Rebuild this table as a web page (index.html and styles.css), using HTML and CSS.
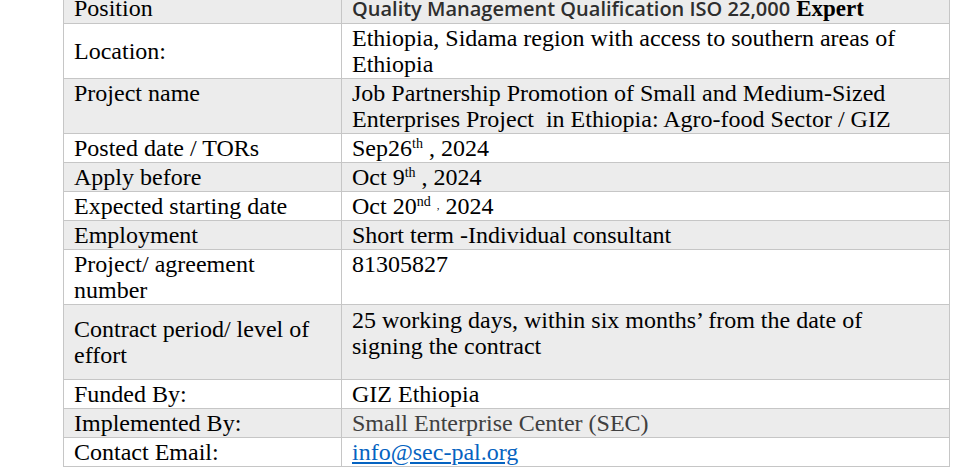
FILE: index.html
```html
<!DOCTYPE html>
<html>
<head>
<meta charset="utf-8">
<link rel="stylesheet" href="styles.css">
</head>
<body>
<table class="info">
  <colgroup><col class="c-label"><col class="c-value"></colgroup>
  <tr class="alt">
    <td>Position</td>
    <td class="val"><span class="head-sans">Quality Management Qualification ISO 22,000</span> <b class="head-serif">Expert</b></td>
  </tr>
  <tr>
    <td class="mid">Location:</td>
    <td class="val">Ethiopia, Sidama region with access to southern areas of Ethiopia</td>
  </tr>
  <tr class="alt">
    <td>Project name</td>
    <td class="val">Job Partnership Promotion of Small and Medium-Sized Enterprises Project&nbsp; in Ethiopia: Agro-food Sector / GIZ</td>
  </tr>
  <tr>
    <td>Posted date / TORs</td>
    <td class="val">Sep26<sup>th</sup> , 2024</td>
  </tr>
  <tr class="alt">
    <td>Apply before</td>
    <td class="val">Oct 9<sup>th</sup> , 2024</td>
  </tr>
  <tr>
    <td>Expected starting date</td>
    <td class="val">Oct 20<sup>nd</sup> <span class="tiny">,</span> 2024</td>
  </tr>
  <tr class="alt">
    <td>Employment</td>
    <td class="val">Short term -Individual consultant</td>
  </tr>
  <tr>
    <td>Project/ agreement number</td>
    <td class="val">81305827</td>
  </tr>
  <tr class="alt">
    <td class="mid">Contract period/ level of effort</td>
    <td class="val padded">25 working days, within six months’ from the date of signing the contract</td>
  </tr>
  <tr>
    <td>Funded By:</td>
    <td class="val">GIZ Ethiopia</td>
  </tr>
  <tr class="alt">
    <td>Implemented By:</td>
    <td class="val muted">Small Enterprise Center (SEC)</td>
  </tr>
  <tr>
    <td>Contact Email:</td>
    <td class="val"><a class="mail" href="#">info@sec-pal.org</a></td>
  </tr>
</table>
</body>
</html>
```
FILE: styles.css
```css
html, body {
  margin: 0;
  padding: 0;
  background: #ffffff;
}
body {
  font-family: "Liberation Serif", "Times New Roman", serif;
  color: #000000;
}
.info {
  border-collapse: collapse;
  margin: -7px 0 0 63px;
  width: 887px;
  table-layout: fixed;
  font-size: 24px;
  line-height: 26px;
}
.c-label { width: 278px; }
.info td {
  border: 1px solid #c6c6c6;
  padding: 1px 10px 1px 10px;
  vertical-align: top;
  background: #ffffff;
}
.info td.val {
  padding-right: 45px;
}
.info tr.alt td {
  background: #ececec;
}
.info td.mid {
  vertical-align: middle;
}
.info td.padded {
  padding-top: 2px;
  padding-bottom: 20px;
}
.head-sans {
  font-family: "Open Sans", "Liberation Sans", sans-serif;
  font-weight: 600;
  font-size: 20px;
  color: #2e2e2e;
}
.head-serif {
  font-weight: bold;
  font-size: 23px;
}
sup {
  font-size: 14px;
  line-height: 0;
  vertical-align: 8px;
}
.tiny {
  font-size: 11px;
  vertical-align: 5px;
  line-height: 0;
}
.muted {
  color: #404040;
}
.mail {
  color: #0563c1;
  text-decoration: underline;
}
```
